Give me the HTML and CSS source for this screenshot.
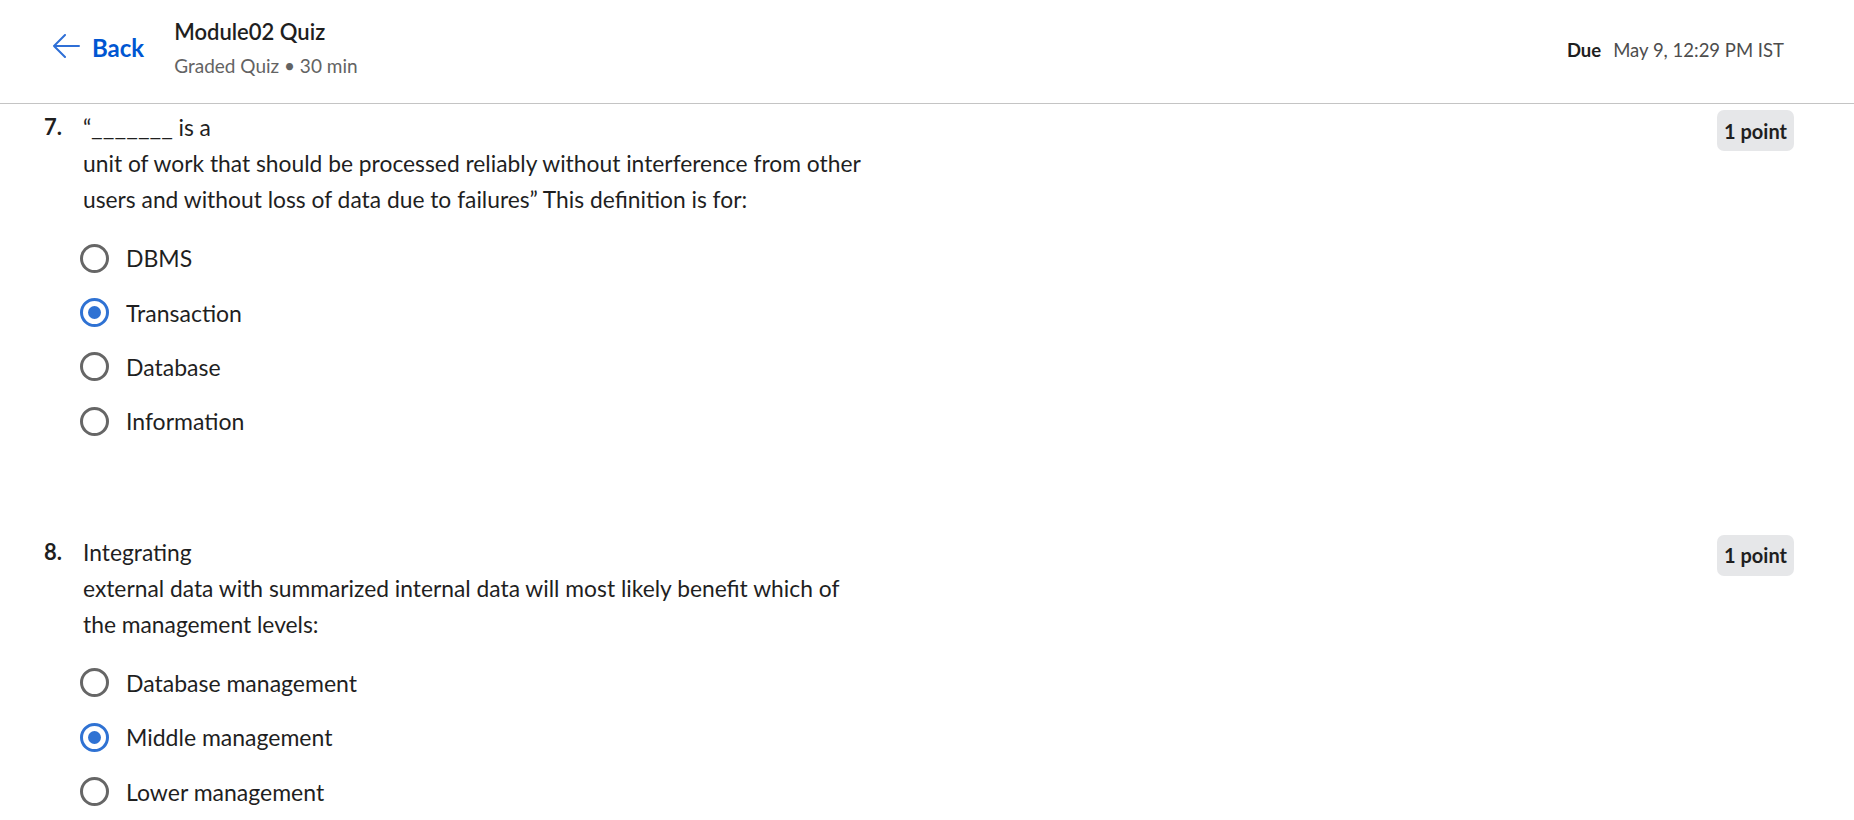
FILE: index.html
```html
<!DOCTYPE html>
<html lang="en">
<head>
<meta charset="utf-8">
<title>Module02 Quiz</title>
<link rel="stylesheet" href="styles.css">
</head>
<body>
<header class="topbar">
  <a class="back" href="#">
    <svg class="back-icon" width="28" height="24" viewBox="0 0 28 24" aria-hidden="true">
      <path d="M27 12H2M13 1L2 12L13 23" fill="none" stroke="#2f6fd6" stroke-width="2" stroke-linecap="round" stroke-linejoin="round"/>
    </svg>
    <span>Back</span>
  </a>
  <div class="title-block">
    <div class="title">Module02 Quiz</div>
    <div class="meta">Graded Quiz • 30 min</div>
  </div>
  <div class="due"><b>Due</b><span class="due-date">May 9, 12:29 PM IST</span></div>
</header>

<main class="questions">
  <section class="question">
    <div class="q-head">
      <div class="q-num">7.</div>
      <div class="q-text">“<span class="blank">_______</span> is a<br>unit of work that should be processed reliably without interference from other<br>users and without loss of data due to failures” This definition is for:</div>
      <div class="points">1 point</div>
    </div>
    <div class="options">
      <div class="option"><span class="radio"></span><span class="label">DBMS</span></div>
      <div class="option"><span class="radio checked"></span><span class="label">Transaction</span></div>
      <div class="option"><span class="radio"></span><span class="label">Database</span></div>
      <div class="option"><span class="radio"></span><span class="label">Information</span></div>
    </div>
  </section>

  <section class="question">
    <div class="q-head">
      <div class="q-num">8.</div>
      <div class="q-text">Integrating<br>external data with summarized internal data will most likely benefit which of<br>the management levels:</div>
      <div class="points">1 point</div>
    </div>
    <div class="options">
      <div class="option"><span class="radio"></span><span class="label">Database management</span></div>
      <div class="option"><span class="radio checked"></span><span class="label">Middle management</span></div>
      <div class="option"><span class="radio"></span><span class="label">Lower management</span></div>
    </div>
  </section>
</main>
</body>
</html>
```
FILE: styles.css
```css
* { box-sizing: border-box; }

html, body {
  margin: 0;
  padding: 0;
  background: #ffffff;
  color: #1f1f1f;
  font-family: "Lato", "Open Sans", sans-serif;
  overflow: hidden;
}

.topbar {
  display: flex;
  align-items: flex-start;
  height: 104px;
  padding: 14px 70px 0 52px;
  border-bottom: 1px solid #c4c4c4;
}

.back {
  display: flex;
  align-items: center;
  gap: 12px;
  margin-top: 15px;
  height: 36px;
  color: #0056d2;
  font-size: 24px;
  font-weight: 700;
  text-decoration: none;
}

.back-icon { display: block; margin-top: -3px; }

.title-block {
  margin-left: 30px;
}

.title {
  font-size: 22px;
  font-weight: 600;
  line-height: 36px;
  color: #1f1f1f;
}

.meta {
  font-size: 19px;
  line-height: 32px;
  color: #636363;
}

.due {
  margin-left: auto;
  margin-top: 20px;
  font-size: 18.5px;
  line-height: 32px;
  display: flex;
  gap: 12px;
}

.due b { color: #1f1f1f; font-weight: 700; }
.due-date { color: #4d4d4d; }

.questions {
  padding: 5px 60px 0 44px;
}

.question {
  margin-bottom: 85px;
}

.q-head {
  display: flex;
  align-items: flex-start;
}

.q-num {
  width: 39px;
  flex: none;
  font-size: 22px;
  font-weight: 700;
  line-height: 36px;
}

.q-text {
  flex: 1;
  font-size: 22.8px;
  line-height: 36px;
}

.blank {
  display: inline-block;
  transform: scaleX(1.12);
  transform-origin: left center;
  margin-right: 8px;
}

.points {
  flex: none;
  margin-top: 1px;
  height: 41px;
  padding: 0 7px;
  display: flex;
  align-items: center;
  background: #e6e7e9;
  border-radius: 7px;
  font-size: 20px;
  font-weight: 700;
  color: #1f1f1f;
}

.options {
  margin-top: 14px;
  padding-left: 36px;
}

.option {
  display: flex;
  align-items: center;
  height: 54.4px;
}

.radio {
  flex: none;
  width: 29px;
  height: 29px;
  border: 3px solid #666666;
  border-radius: 50%;
  display: flex;
  align-items: center;
  justify-content: center;
}

.radio.checked {
  border-color: #2f72d3;
}

.radio.checked::after {
  content: "";
  width: 13px;
  height: 13px;
  border-radius: 50%;
  background: #2f72d3;
}

.label {
  margin-left: 17px;
  font-size: 23px;
  color: #1f1f1f;
}
```
